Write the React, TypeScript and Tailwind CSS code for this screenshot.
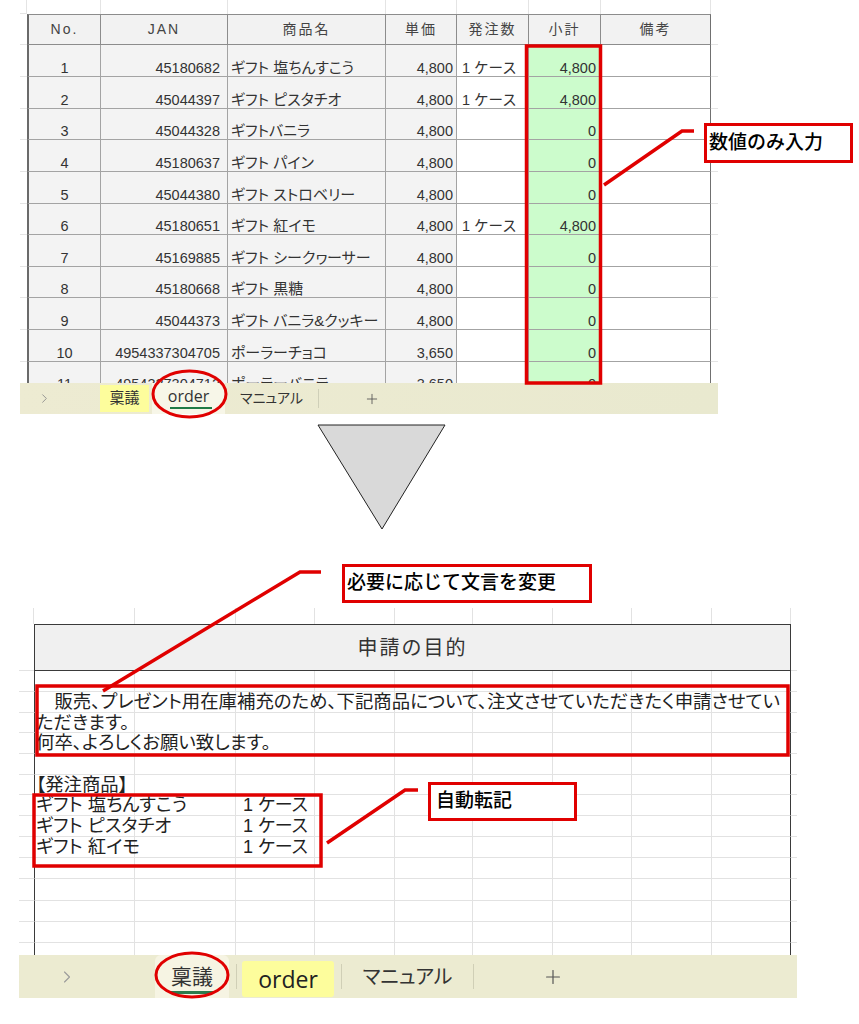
import { ChevronLeft, ChevronRight, Plus } from "lucide-react";

// column widths of the order sheet (No. → 備考)
const TOP_COLS = ["w-[74px]", "w-[127px]", "w-[158px]", "w-[71px]", "w-[72px]", "w-[72px]", "w-[110px]"];
const TOP_HEAD = ["No.", "JAN", "商品名", "単価", "発注数", "小計", "備考"];

type OrderRow = { no: string; jan: string; name: string; price: string; qty: string; sub: string; h: string };

const ORDERS: OrderRow[] = [
  { no: "1", jan: "45180682", name: "ギフト 塩ちんすこう", price: "4,800", qty: "1 ケース", sub: "4,800", h: "h-[32px]" },
  { no: "2", jan: "45044397", name: "ギフト ピスタチオ", price: "4,800", qty: "1 ケース", sub: "4,800", h: "h-[32px]" },
  { no: "3", jan: "45044328", name: "ギフトバニラ", price: "4,800", qty: "", sub: "0", h: "h-[31px]" },
  { no: "4", jan: "45180637", name: "ギフト パイン", price: "4,800", qty: "", sub: "0", h: "h-[32px]" },
  { no: "5", jan: "45044380", name: "ギフト ストロベリー", price: "4,800", qty: "", sub: "0", h: "h-[32px]" },
  { no: "6", jan: "45180651", name: "ギフト 紅イモ", price: "4,800", qty: "1 ケース", sub: "4,800", h: "h-[31px]" },
  { no: "7", jan: "45169885", name: "ギフト シークヮーサー", price: "4,800", qty: "", sub: "0", h: "h-[32px]" },
  { no: "8", jan: "45180668", name: "ギフト 黒糖", price: "4,800", qty: "", sub: "0", h: "h-[31px]" },
  { no: "9", jan: "45044373", name: "ギフト バニラ&クッキー", price: "4,800", qty: "", sub: "0", h: "h-[32px]" },
  { no: "10", jan: "4954337304705", name: "ポーラーチョコ", price: "3,650", qty: "", sub: "0", h: "h-[32px]" },
  { no: "11", jan: "4954337304712", name: "ポーラーバニラ", price: "3,650", qty: "", sub: "0", h: "h-[31px]" },
];

// 稟議 sheet grid
const BOT_COLS = ["w-[101px]", "w-[101px]", "w-[79px]", "w-[80px]", "w-[78px]", "w-[80px]", "w-[79px]", "w-[80px]", "w-[79px]"];

type BodyRow = { h: string; text?: string; qty?: string };

const BODY: BodyRow[] = [
  { h: "h-[21px]" },
  { h: "h-[21px]", text: "　販売、プレゼント用在庫補充のため、下記商品について、注文させていただきたく申請させてい" },
  { h: "h-[20px]", text: "ただきます。" },
  { h: "h-[21px]", text: "何卒、よろしくお願い致します。" },
  { h: "h-[21px]" },
  { h: "h-[20px]", text: "【発注商品】" },
  { h: "h-[21px]", text: "ギフト 塩ちんすこう", qty: "1 ケース" },
  { h: "h-[21px]", text: "ギフト ピスタチオ", qty: "1 ケース" },
  { h: "h-[21px]", text: "ギフト 紅イモ", qty: "1 ケース" },
  { h: "h-[21px]" },
  { h: "h-[22px]" },
  { h: "h-[21px]" },
  { h: "h-[21px]" },
  { h: "h-[21px]" },
];

function OrderSheet() {
  return (
    <div className="ml-[20px] w-[698px] flex flex-col">
      <div className="h-[383px] overflow-hidden flex flex-col bg-white">
        {/* gridlines above the table */}
        <div className="flex h-[14px] shrink-0">
          <div className="w-[7px] border-b border-r border-[#e4e4e4]" />
          {TOP_COLS.map((w, i) => (
            <div key={i} className={`${w} shrink-0 border-r border-[#e4e4e4]`} />
          ))}
        </div>

        {/* header */}
        <div className="flex h-[31px] shrink-0">
          <div className="w-[7px] border-b border-[#e4e4e4]" />
          {TOP_HEAD.map((t, i) => (
            <div
              key={t}
              className={`${TOP_COLS[i]} shrink-0 flex items-center justify-center bg-[#f2f2f2] border-t border-b border-r border-[#8c8c8c] text-[14px] tracking-[2px] text-[#444] ${i === 0 ? "border-l-2 border-l-[#6a6a6a]" : ""} ${i === 6 ? "border-r-[#707070]" : ""}`}
            >
              {t}
            </div>
          ))}
          <div className="w-[7px] border-b border-[#e4e4e4]" />
        </div>

        {ORDERS.map((r) => (
          <div key={r.no} className={`flex ${r.h} shrink-0 text-[14.5px] leading-[16px] text-[#333]`}>
            <div className="w-[7px] border-b border-[#e4e4e4]" />
            <div className={`${TOP_COLS[0]} shrink-0 flex items-end justify-center bg-[#f3f3f3] border-l-2 border-l-[#6a6a6a] border-r border-b border-[#a3a3a3]`}>{r.no}</div>
            <div className={`${TOP_COLS[1]} shrink-0 flex items-end justify-end pr-[7px] bg-[#f3f3f3] border-r border-b border-[#a3a3a3]`}>{r.jan}</div>
            <div className={`${TOP_COLS[2]} shrink-0 flex items-end pl-[3px] bg-[#f3f3f3] border-r border-b border-[#a3a3a3] whitespace-nowrap text-[15px] [font-feature-settings:'palt']`}>{r.name}</div>
            <div className={`${TOP_COLS[3]} shrink-0 flex items-end justify-end pr-[3px] bg-[#f3f3f3] border-r border-b border-[#a3a3a3]`}>{r.price}</div>
            <div className={`${TOP_COLS[4]} shrink-0 flex items-end pl-[5px] bg-white border-r border-b border-[#a3a3a3] whitespace-nowrap`}>{r.qty}</div>
            <div className={`${TOP_COLS[5]} shrink-0 flex items-end justify-end pr-[4px] bg-[#ccfccc] border-r border-b border-[#a3a3a3]`}>{r.sub}</div>
            <div className={`${TOP_COLS[6]} shrink-0 bg-white border-r border-b border-r-[#707070] border-b-[#a3a3a3]`} />
            <div className="w-[7px] border-b border-[#e4e4e4]" />
          </div>
        ))}
      </div>

      {/* sheet tabs */}
      <div className="h-[31px] flex items-stretch bg-gradient-to-r from-[#edebd2] to-[#e9e9cf] text-[#333]">
        <div className="w-[80px] flex items-center pl-[17px] text-[#8a8a8a]">
          <ChevronRight size={15} strokeWidth={1.4} />
        </div>
        <div className="w-[49px] mt-[2px] mb-[2px] flex items-center justify-center bg-[#fdfd9c] text-[15px]">稟議</div>
        <div className="w-[73px] ml-[3px] pb-[5px] relative flex items-center justify-center bg-[#f7f6e8] text-[16px] font-['Open_Sans',sans-serif]">
          order
          <div className="absolute left-[18px] right-[13px] bottom-[5px] h-[2px] bg-[#1e7a45]" />
        </div>
        <div className="w-[93px] flex items-center justify-center text-[14px] [font-feature-settings:'palt']">マニュアル</div>
        <div className="w-px my-[6px] bg-[#cfcfb8]" />
        <div className="w-[106px] flex items-center justify-center text-[#555]">
          <Plus size={16} strokeWidth={1.3} />
        </div>
      </div>
    </div>
  );
}

function RingiSheet() {
  return (
    <div className="ml-[19px] w-[778px] flex flex-col">
      <div className="h-[347px] overflow-hidden flex flex-col bg-white text-[#222]">
        {/* gridlines above the table */}
        <div className="flex h-[16px] shrink-0">
          <div className="w-[15px] border-r border-[#e2e2e2]" />
          {BOT_COLS.map((w, i) => (
            <div key={i} className={`${w} shrink-0 border-r border-[#e2e2e2]`} />
          ))}
        </div>

        {/* title */}
        <div className="flex h-[47px] shrink-0">
          <div className="w-[15px] border-b border-[#e2e2e2]" />
          <div className="w-[757px] shrink-0 flex items-center justify-center bg-[#f0f0f0] border border-[#3a3a3a] text-[20px] tracking-[2px] text-[#333]">
            申請の目的
          </div>
          <div className="w-[6px] border-b border-[#e2e2e2]" />
        </div>

        {BODY.map((r, ri) => (
          <div key={ri} className={`flex ${r.h} shrink-0`}>
            <div className="w-[15px] border-b border-[#e2e2e2]" />
            {BOT_COLS.map((w, i) => (
              <div
                key={i}
                className={`${w} shrink-0 flex items-center border-r border-b border-[#e2e2e2] ${i === 0 ? "border-l border-l-[#3a3a3a]" : ""} ${i === 8 ? "border-r-[#3a3a3a]" : ""}`}
              >
                {i === 0 && r.text && (
                  <span className="relative pl-[1px] whitespace-nowrap text-[18.4px] leading-[20px] [font-feature-settings:'palt']">{r.text}</span>
                )}
                {i === 2 && r.qty && (
                  <span className="pl-[7px] whitespace-nowrap text-[18px] leading-[20px] [font-feature-settings:'palt']">{r.qty}</span>
                )}
              </div>
            ))}
            <div className="w-[6px] border-b border-[#e2e2e2]" />
          </div>
        ))}
      </div>

      {/* sheet tabs */}
      <div className="h-[43px] overflow-hidden flex items-stretch bg-[#ecebd1] text-[#333]">
        <div className="w-[136px] flex items-center text-[#9a9a9a]">
          <ChevronLeft size={20} strokeWidth={1.3} className="ml-[-13px]" />
          <ChevronRight size={20} strokeWidth={1.3} className="ml-[31px]" />
        </div>
        <div className="w-[74px] relative flex items-center justify-center bg-[#f6f4e3] rounded-t-[6px] text-[21px]">
          稟議
          <div className="absolute left-[15px] right-[16px] bottom-[4px] h-[3px] bg-[#2c7a4c]" />
        </div>
        <div className="w-[7px]" />
        <div className="w-px my-[9px] bg-[#d0cfb6]" />
        <div className="w-[92px] ml-[5px] mt-[6px] mb-[1px] flex items-center justify-center bg-[#fdfd9c] rounded-[3px] text-[23px] text-[#222] font-['Open_Sans',sans-serif]">
          order
        </div>
        <div className="w-[7px]" />
        <div className="w-px my-[9px] bg-[#d0cfb6]" />
        <div className="w-[131px] flex items-center justify-center text-[20px] [font-feature-settings:'palt']">マニュアル</div>
        <div className="w-px my-[9px] bg-[#d0cfb6]" />
        <div className="w-[157px] flex items-center justify-center text-[#555]">
          <Plus size={22} strokeWidth={1.3} />
        </div>
      </div>
    </div>
  );
}

function Callout({ className, children }: { className: string; children: string }) {
  return (
    <div className={`absolute bg-white border-[3px] border-[#e00000] flex items-center text-[19px] font-medium text-black ${className}`}>
      {children}
    </div>
  );
}

export default function App() {
  return (
    <div className="relative w-[859px] h-[1024px] bg-white overflow-hidden font-['Liberation_Sans','Noto_Sans_CJK_JP',sans-serif]">
      <OrderSheet />
      <div className="h-[194px]" />
      <RingiSheet />

      {/* annotations */}
      <Callout className="left-[704px] top-[123px] w-[149px] h-[40px] pl-[2px]">数値のみ入力</Callout>
      <Callout className="left-[342px] top-[564px] w-[250px] h-[39px] pl-[2px]">必要に応じて文言を変更</Callout>
      <Callout className="left-[428px] top-[782px] w-[149px] h-[39px] pl-[5px]">自動転記</Callout>

      <svg className="absolute left-0 top-0 pointer-events-none" width="859" height="1024" viewBox="0 0 859 1024">
        <g fill="none" stroke="#e00000" strokeWidth="3.5" strokeLinejoin="miter">
          <rect x="526.5" y="46" width="74" height="337" />
          <polyline points="604,185 682,131 694,131" />
          <ellipse cx="189.5" cy="394" rx="36.5" ry="23" strokeWidth="3" />
          <polyline points="103,691 300,572 321,572" />
          <rect x="37" y="686" width="751" height="69" />
          <rect x="34" y="795" width="287" height="71" />
          <polyline points="327,843 405,790 418,790" />
          <ellipse cx="192" cy="975" rx="36" ry="22" strokeWidth="3" />
        </g>
        <polygon points="318,425 445,425 382,529" fill="#d9d9d9" stroke="#222" strokeWidth="1" />
      </svg>
    </div>
  );
}
